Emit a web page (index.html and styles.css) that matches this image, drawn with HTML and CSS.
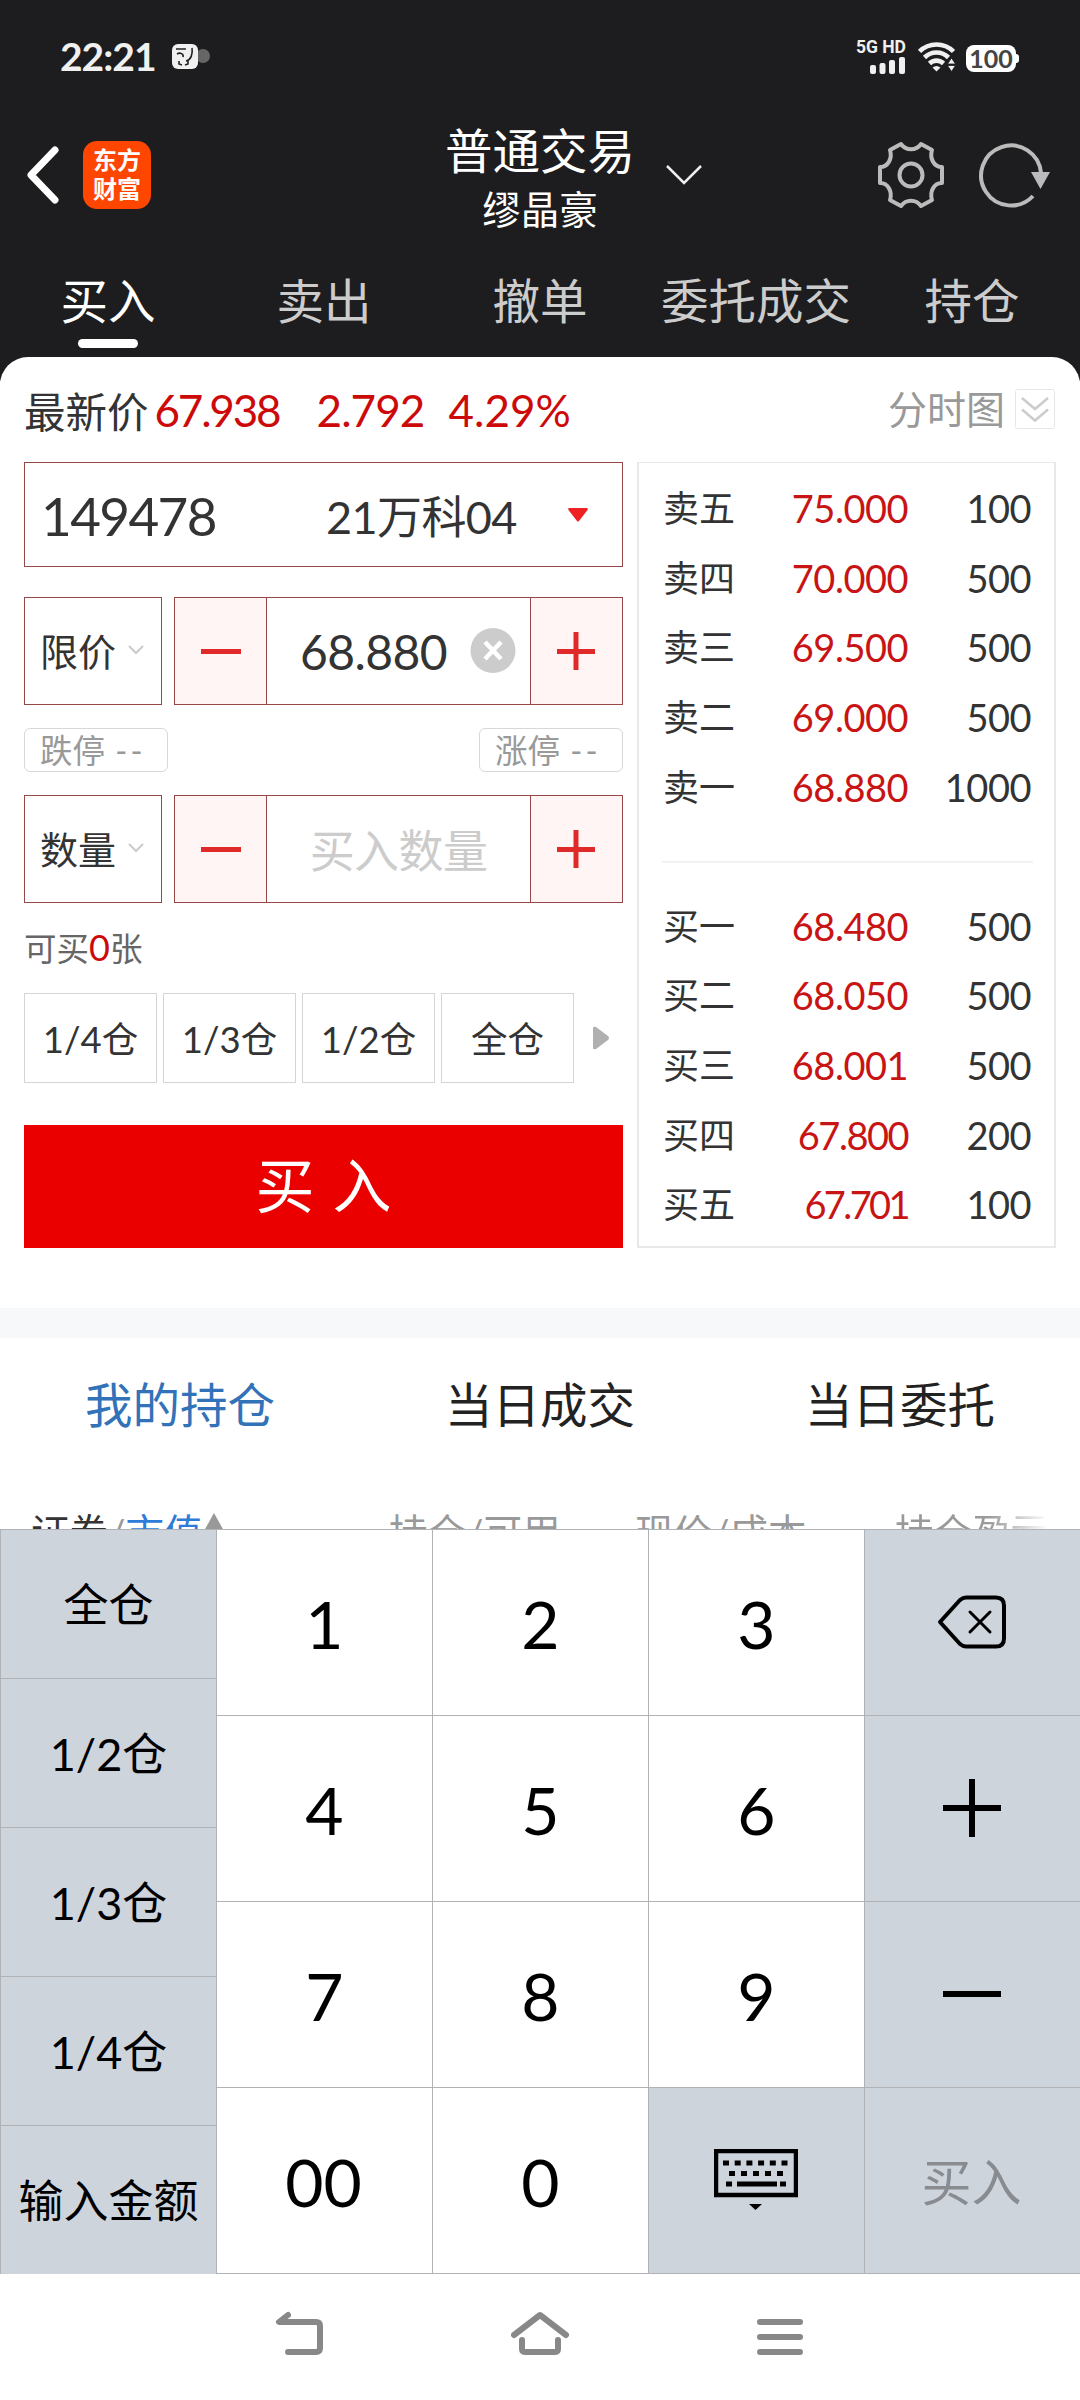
FILE: index.html
```html
<!DOCTYPE html>
<html lang="zh-CN">
<head>
  <meta charset="utf-8">
  <title>普通交易</title>
  <link rel="stylesheet" href="styles.css">
</head>
<body>
  <header class="top">
    <div class="status">
      <span class="clock">22:21</span>
      <svg class="status-app" width="40" height="28" viewBox="0 0 40 28">
        <circle cx="32" cy="13" r="7" fill="#666"/>
        <rect x="1" y="1" width="26" height="25" rx="6" fill="#f0f0f0"/>
        <path d="M5 6h10M6 11c3-2 7 0 6 3M21 5c1 6-1 12-6 13M8 18v3l3 1M17 18v3l-3 1" fill="none" stroke="#222" stroke-width="1.6"/>
      </svg>
      <div class="status-right">
        <div class="signal">
          <span>5G HD</span>
          <svg width="36" height="17" viewBox="0 0 36 17" fill="#f0f0f0">
            <rect x="0" y="8" width="6" height="9" rx="2"/>
            <rect x="9.500" y="6" width="6" height="11" rx="2"/>
            <rect x="19" y="3" width="6" height="14" rx="2"/>
            <rect x="29" y="0" width="6" height="17" rx="2"/>
          </svg>
        </div>
        <svg class="wifi" width="38" height="30" viewBox="0 0 38 30">
          <g fill="none" stroke="#f0f0f0" stroke-width="4.600">
            <path d="M1.500 9.500a24 24 0 0 1 34 0"/>
            <path d="M6.500 15.500a17 17 0 0 1 24 0"/>
            <path d="M11.500 21.500a10 10 0 0 1 14 0"/>
          </g>
          <path d="M18.500 29.500l-4-4q4-3 8 0z" fill="#f0f0f0"/>
          <path d="M29.500 22l4-6 4 6zM29.500 23.500h8l-4 6z" fill="#f0f0f0" stroke="#1d1d1f" stroke-width=".8"/>
        </svg>
        <span class="battery">100</span>
      </div>
    </div>

    <div class="titlebar">
      <svg class="back" width="36" height="60" viewBox="0 0 36 60"><path d="M31 5L7 30l24 25" fill="none" stroke="#fff" stroke-width="7" stroke-linecap="round" stroke-linejoin="round"/></svg>
      <div class="logo">东方<br>财富</div>
      <div class="title">
        <h1>普通交易</h1>
        <p>缪晶豪</p>
      </div>
      <svg class="title-arrow" width="36" height="22" viewBox="0 0 36 22"><path d="M1 2l17 17L35 2" fill="none" stroke="#eee" stroke-width="2.500"/></svg>
      <svg class="gear" width="68" height="68" viewBox="-34 -34 68 68">
        <path d="M-10-31C-5-24 5-24 10-31L21-25C18.300-16.300 23.300-7.700 31-8V8C23.300 7.700 18.300 16.300 21 25L10 31C5 24-5 24-10 31L-21 25C-18.300 16.300-23.300 7.700-31 8V-8C-23.300-7.700-18.300-16.300-21-25Z" fill="none" stroke="#bbb" stroke-width="4" stroke-linejoin="round"/>
        <circle r="11.500" fill="none" stroke="#bbb" stroke-width="4"/>
      </svg>
      <svg class="refresh" width="74" height="68" viewBox="-34 -34 74 68">
        <path d="M22 21A30 30 0 1 1 30-2" fill="none" stroke="#bbb" stroke-width="4"/>
        <path d="M20-3h19L29.500 14z" fill="#bbb"/>
      </svg>
    </div>

    <nav class="tabs">
      <a class="active">买入</a>
      <a>卖出</a>
      <a>撤单</a>
      <a>委托成交</a>
      <a>持仓</a>
    </nav>
  </header>

  <main class="sheet">
    <div class="quote">
      <span class="quote-label">最新价</span>
      <span class="quote-price">67.938</span>
      <span class="quote-diff">2.792</span>
      <span class="quote-pct">4.29%</span>
      <span class="chart-link">分时图</span>
      <svg width="40" height="40" viewBox="0 0 40 40" fill="none">
        <rect x=".5" y=".5" width="39" height="39" rx="2" stroke="#e6e6e6"/>
        <path d="M7 9l13 11L33 9M7 20.500l13 11 13-11" stroke="#ccc" stroke-width="2.500"/>
      </svg>
    </div>

    <div class="trade">
      <form class="order">
        <div class="stock">
          <span class="code">149478</span>
          <span class="name">21万科04</span>
          <svg width="22" height="16" viewBox="0 0 22 16"><path d="M2 1h18q1.500.5.500 2L12 14q-1 1-2 0L1.500 3Q.5 1.500 2 1z" fill="#ee2222"/></svg>
        </div>

        <div class="row">
          <div class="kind">限价<svg width="18" height="12" viewBox="0 0 18 12"><path d="M2 2l7 7 7-7" fill="none" stroke="#ccc" stroke-width="2.200"/></svg></div>
          <div class="stepper">
            <div class="step"><svg width="40" height="40" viewBox="0 0 40 40"><path d="M0 20.500h40" stroke="#e02a2a" stroke-width="5"/></svg></div>
            <div class="value">68.880<svg width="46" height="46" viewBox="0 0 46 46"><circle cx="23" cy="22.500" r="22.500" fill="#ccc"/><path d="M15 14l16 17M31 14L15 31" stroke="#fff" stroke-width="4.500"/></svg></div>
            <div class="step"><svg width="40" height="40" viewBox="0 0 40 40"><path d="M0 20.500h38M19 1v38" stroke="#e02a2a" stroke-width="5"/></svg></div>
          </div>
        </div>

        <div class="limits">
          <span>跌停 <b>--</b></span>
          <span>涨停 <b>--</b></span>
        </div>

        <div class="row">
          <div class="kind">数量<svg width="18" height="12" viewBox="0 0 18 12"><path d="M2 2l7 7 7-7" fill="none" stroke="#ccc" stroke-width="2.200"/></svg></div>
          <div class="stepper">
            <div class="step"><svg width="40" height="40" viewBox="0 0 40 40"><path d="M0 20.500h40" stroke="#e02a2a" stroke-width="5"/></svg></div>
            <div class="value placeholder">买入数量</div>
            <div class="step"><svg width="40" height="40" viewBox="0 0 40 40"><path d="M0 20.500h38M19 1v38" stroke="#e02a2a" stroke-width="5"/></svg></div>
          </div>
        </div>

        <p class="available">可买<b>0</b>张</p>

        <div class="portions">
          <span>1/4仓</span>
          <span>1/3仓</span>
          <span>1/2仓</span>
          <span>全仓</span>
          <svg width="18" height="24" viewBox="0 0 18 24"><path d="M1 2q0-2 3-1l12 9q2 2 0 4L4 23q-3 1-3-1z" fill="#b0b0b0"/></svg>
        </div>

        <div class="buy">买 入</div>
      </form>

      <div class="book">
        <div class="level"><span>卖五</span><b>75.000</b><i>100</i></div>
        <div class="level"><span>卖四</span><b>70.000</b><i>500</i></div>
        <div class="level"><span>卖三</span><b>69.500</b><i>500</i></div>
        <div class="level"><span>卖二</span><b>69.000</b><i>500</i></div>
        <div class="level"><span>卖一</span><b>68.880</b><i>1000</i></div>
        <hr>
        <div class="level"><span>买一</span><b>68.480</b><i>500</i></div>
        <div class="level"><span>买二</span><b>68.050</b><i>500</i></div>
        <div class="level"><span>买三</span><b>68.001</b><i>500</i></div>
        <div class="level"><span>买四</span><b class="tight">67.800</b><i>200</i></div>
        <div class="level"><span>买五</span><b class="tighter">67.701</b><i>100</i></div>
      </div>
    </div>
  </main>

  <section class="holdings">
    <nav class="subtabs">
      <a class="active">我的持仓</a>
      <a>当日成交</a>
      <a>当日委托</a>
    </nav>
    <div class="columns">
      <span class="col-name"><em>证券</em>/<strong>市值</strong><svg width="20" height="34" viewBox="0 0 20 34"><path d="M10 0l10 18H0z" fill="#999"/></svg></span>
      <span class="col-hold">持仓/可用</span>
      <span class="col-cost">现价/成本</span>
      <span class="col-profit">持仓盈亏</span>
    </div>
  </section>

  <section class="keyboard">
    <div class="quick">
      <span>全仓</span>
      <span>1/2仓</span>
      <span>1/3仓</span>
      <span>1/4仓</span>
      <span>输入金额</span>
    </div>
    <div class="keys">
      <span>1</span>
      <span>2</span>
      <span>3</span>
      <span class="fn"><svg width="70" height="54" viewBox="0 0 70 54" fill="none" stroke="#000" stroke-linecap="round" stroke-linejoin="round"><path d="M3 27L23 5q3-2.500 6-2.500h30q8 0 8 8v33q0 8-8 8H29q-3 0-6-2.500z" stroke-width="4"/><path d="M33 17l20 20M53 17L33 37" stroke-width="3"/></svg></span>
      <span>4</span>
      <span>5</span>
      <span>6</span>
      <span class="fn"><svg width="58" height="58" viewBox="0 0 58 58"><path d="M0 29h58M29 0v58" stroke="#000" stroke-width="6"/></svg></span>
      <span>7</span>
      <span>8</span>
      <span>9</span>
      <span class="fn"><svg width="58" height="58" viewBox="0 0 58 58"><path d="M0 29h58" stroke="#000" stroke-width="6"/></svg></span>
      <span class="double">00</span>
      <span>0</span>
      <span class="fn"><svg width="84" height="62" viewBox="0 0 84 62"><rect x="2" y="2" width="80" height="44" fill="none" stroke="#000" stroke-width="4.500"/><path d="M9 14h66" stroke="#000" stroke-width="5" stroke-dasharray="6 5.700"/><path d="M15 24.500h55" stroke="#000" stroke-width="5" stroke-dasharray="6 6"/><path d="M12 35h6M23 35h40M66 35h6" stroke="#000" stroke-width="5"/><path d="M35 55h13l-6.500 6z"/></svg></span>
      <span class="fn submit">买入</span>
    </div>
  </section>

  <footer class="navbar">
    <svg width="50" height="46" viewBox="0 0 50 46"><path d="M13 4L4 11h37q4 0 4 4v22q0 4-4 4H13" /></svg>
    <svg width="60" height="46" viewBox="0 0 60 46"><path d="M3 24L29 4l26 20M11 29v9q0 3 4 3h28q4 0 4-3v-9"/></svg>
    <svg width="48" height="46" viewBox="0 0 48 46"><path d="M3 11h40M3 26h40M3 41h40"/></svg>
  </footer>
</body>
</html>
```
FILE: styles.css
```css
* {
  box-sizing: border-box;
}

body {
  background: #fff;
  color: #333;
  font-family: Lato, "Noto Sans CJK SC", sans-serif;
  height: 2400px;
  margin: 0;
  overflow: hidden;
  width: 1080px;
}

h1, p {
  font-weight: normal;
  margin: 0;
}

b, i, em, strong {
  font-style: normal;
  font-weight: normal;
}

svg {
  display: block;
  flex: none;
}

span, a {
  white-space: nowrap;
}

/* dark header */
.top {
  background: #1d1d1f;
  height: 381px;
}

.status {
  align-items: center;
  color: #f0f0f0;
  display: flex;
  height: 115px;
  padding: 0 64px 2px 60px;
}
.clock {
  font-size: 39px;
  font-weight: bold;
  letter-spacing: -1px;
  line-height: 46px;
  padding-bottom: 2px;
  width: 111px;
}
.status-right {
  align-items: center;
  display: flex;
  margin-left: auto;
}
.signal {
  align-items: flex-end;
  display: flex;
  flex-direction: column;
  gap: 3px;
  margin-right: 12px;
}
.signal span {
  font-family: Roboto, sans-serif;
  font-size: 17.5px;
  font-weight: bold;
  line-height: 14px;
}
.wifi {
  margin-right: 10px;
}
.battery {
  background: #fff;
  border-radius: 8px;
  color: #444;
  font-size: 25px;
  font-weight: bold;
  height: 27px;
  line-height: 27px;
  margin-top: 3px;
  position: relative;
  text-align: center;
  width: 50px;
}
.battery::after {
  background: #fff;
  border-radius: 0 3px 3px 0;
  content: "";
  height: 9px;
  left: 50px;
  position: absolute;
  top: 9px;
  width: 3px;
}

.titlebar {
  align-items: center;
  display: flex;
  height: 120px;
  padding: 0 30px 0 24px;
}
.back {
  margin-right: 23px;
}
.logo {
  background: #ff4600;
  border-radius: 14px;
  color: #fff;
  font-size: 24px;
  font-weight: bold;
  height: 68px;
  line-height: 29px;
  padding-top: 4px;
  text-align: center;
  width: 68px;
}
.title {
  color: #fff;
  margin-left: 289px;
  padding-top: 9px;
  text-align: center;
  width: 200px;
}
.title h1 {
  font-size: 47.5px;
  line-height: 60px;
  margin-top: -2px;
}
.title p {
  font-size: 38.5px;
  line-height: 56px;
}
.title-arrow {
  margin-left: 26px;
}
.gear {
  margin-left: 175px;
}
.refresh {
  margin-left: auto;
  margin-right: -1px;
}

.tabs {
  display: flex;
}
.tabs a {
  color: #ccc;
  display: flex;
  flex: 1;
  flex-direction: column;
  align-items: center;
  font-size: 47.5px;
  gap: 8px;
  line-height: 60px;
  padding-top: 36px;
}
.tabs .active {
  color: #fff;
}
.tabs .active::after {
  background: #fff;
  border-radius: 5px;
  content: "";
  height: 9px;
  width: 60px;
}

/* trade panel */
.sheet {
  background: #fff;
  border-radius: 28px 28px 0 0;
  height: 951px;
  margin-top: -24px;
  padding: 0 24px;
  position: relative;
}
.quote {
  align-items: center;
  color: #cc0a0a;
  display: flex;
  font-size: 44px;
  height: 105px;
  padding-top: 1px;
}
.quote-label {
  color: #333;
  font-size: 41.5px;
  padding-right: 6px;
}
.quote-price {
  letter-spacing: -2.2px;
  width: 162px;
}
.quote-diff {
  letter-spacing: -.9px;
  width: 132px;
}
.chart-link {
  color: #999;
  font-size: 39px;
  margin-left: auto;
  margin-right: 10px;
  padding-bottom: 6px;
}
.quote svg {
  margin-bottom: 2px;
  margin-right: 1px;
}

.trade {
  display: flex;
  gap: 14px;
}
.order {
  width: 599px;
}
.stock {
  align-items: center;
  border: 1px solid #964848;
  display: flex;
  height: 105px;
  padding: 0 33px 0 16px;
}
.code {
  font-size: 53px;
  letter-spacing: -1.6px;
  padding-top: 2px;
  width: 285px;
}
.name {
  font-size: 45px;
  letter-spacing: -.6px;
}
.stock svg {
  margin-left: auto;
}

.row {
  display: flex;
  gap: 12px;
  margin-top: 30px;
}
.kind {
  align-items: center;
  border: 1px solid #964848;
  display: flex;
  font-size: 38px;
  gap: 11px;
  height: 108px;
  padding: 0 0 3px 15px;
  width: 138px;
}
.stepper {
  border: 1px solid #964848;
  display: flex;
  flex: 1;
  height: 108px;
}
.step {
  align-items: center;
  background: #fff5f4;
  display: flex;
  justify-content: center;
  width: 91px;
}
.value {
  align-items: center;
  border: solid #964848;
  border-width: 0 1px;
  display: flex;
  flex: 1;
  font-size: 48px;
  justify-content: flex-end;
  gap: 23px;
  letter-spacing: -.6px;
  padding-right: 14px;
}
.placeholder {
  color: #ccc;
  font-size: 45px;
  justify-content: center;
  padding: 0 0 2px;
}

.limits {
  color: #999;
  display: flex;
  font-size: 32.5px;
  justify-content: space-between;
  margin-top: 23px;
}
.limits span {
  border: 1px solid #d8d8d8;
  border-radius: 6px;
  height: 44px;
  line-height: 43px;
  padding-left: 15px;
  width: 144px;
}
.limits b {
  letter-spacing: 3px;
  margin-left: 2px;
}
.limits + .row {
  margin-top: 23px;
}

.available {
  color: #666;
  font-size: 32.5px;
  line-height: 50px;
  margin-top: 21px;
}
.available b {
  color: #cc0a0a;
  font-size: 36px;
  line-height: 1;
}

.portions {
  align-items: center;
  display: flex;
  gap: 6px;
  margin-top: 19px;
}
.portions span {
  border: 1px solid #d5d5d5;
  font-size: 36.5px;
  height: 90px;
  line-height: 90px;
  text-align: center;
  width: 133px;
}
.portions svg {
  margin-left: 12px;
}

.buy {
  background: #eb0000;
  color: #fff;
  font-size: 59px;
  height: 123px;
  line-height: 121px;
  margin-top: 42px;
  text-align: center;
  word-spacing: 3px;
}

.book {
  border: 2px solid #e8e8ea;
  border-top-width: 1px;
  height: 786px;
  padding: 11px 23px 0 24px;
  width: 419px;
}
.level {
  display: flex;
  font-size: 38px;
  letter-spacing: -.5px;
  line-height: 69.7px;
}
.level span {
  font-size: 36px;
  letter-spacing: 0;
  width: 80px;
}
.level b {
  color: #c81414;
  text-align: right;
  width: 165px;
}
.level .tight {
  letter-spacing: -1.5px;
}
.level .tighter {
  letter-spacing: -2.6px;
}
.level i {
  flex: 1;
  text-align: right;
}
.book hr {
  background: #f2f2f4;
  border: 0;
  height: 2px;
  margin: 38px -2px 29px -1px;
}

/* positions */
.holdings {
  border-top: 30px solid #f6f8fa;
  height: 221px;
  overflow: hidden;
}
.subtabs {
  color: #222;
  display: flex;
  font-size: 47.5px;
  line-height: 60px;
  padding-top: 37px;
}
.subtabs a {
  flex: 1;
  text-align: center;
}
.subtabs .active {
  color: #3272b8;
}
.columns {
  color: #999;
  display: flex;
  font-size: 38.5px;
  line-height: 50px;
  padding: 72px 0 0 31px;
}
.columns em {
  color: #333;
}
.columns strong {
  color: #2f7bd8;
}
.columns svg {
  display: inline-block;
  margin-left: 2px;
}
.col-name {
  width: 358px;
}
.col-hold {
  width: 246px;
}
.col-cost {
  width: 260px;
}
.col-profit {
  background: linear-gradient(90deg, #999 60%, #fff 100%);
  background-clip: text;
  -webkit-background-clip: text;
  color: transparent;
}

/* keypad */
.keyboard {
  background: #ced4dc;
  color: #000;
  display: flex;
  height: 745px;
}
.quick {
  border-left: 1px solid #b0b2b5;
  display: flex;
  flex-direction: column;
  width: 216px;
}
.quick span {
  align-items: center;
  border-top: 1px solid #b0b2b5;
  display: flex;
  flex: 1;
  font-size: 45px;
  justify-content: center;
  padding-bottom: 3px;
}
.keys {
  border-bottom: 1px solid #b0b2b5;
  display: grid;
  flex: 1;
  grid-template-columns: repeat(4, 216px);
  grid-template-rows: repeat(4, 1fr);
}
.keys span {
  align-items: center;
  background: #fff;
  border-left: 1px solid #b0b2b5;
  border-top: 1px solid #b0b2b5;
  display: flex;
  font-size: 66px;
  justify-content: center;
  padding-top: 2px;
}
.keys .double {
  padding-right: 2px;
}
.keys .fn {
  background: #ced4dc;
  padding: 0 2px 1px 0;
}
.keys .submit {
  color: #888b90;
  font-size: 50px;
  padding: 0 2px 4px 0;
}

.navbar {
  display: flex;
  justify-content: space-between;
  padding: 37px 275px 0;
}
.navbar svg {
  fill: none;
  stroke: #888;
  stroke-linecap: round;
  stroke-linejoin: round;
  stroke-width: 6;
}
```
